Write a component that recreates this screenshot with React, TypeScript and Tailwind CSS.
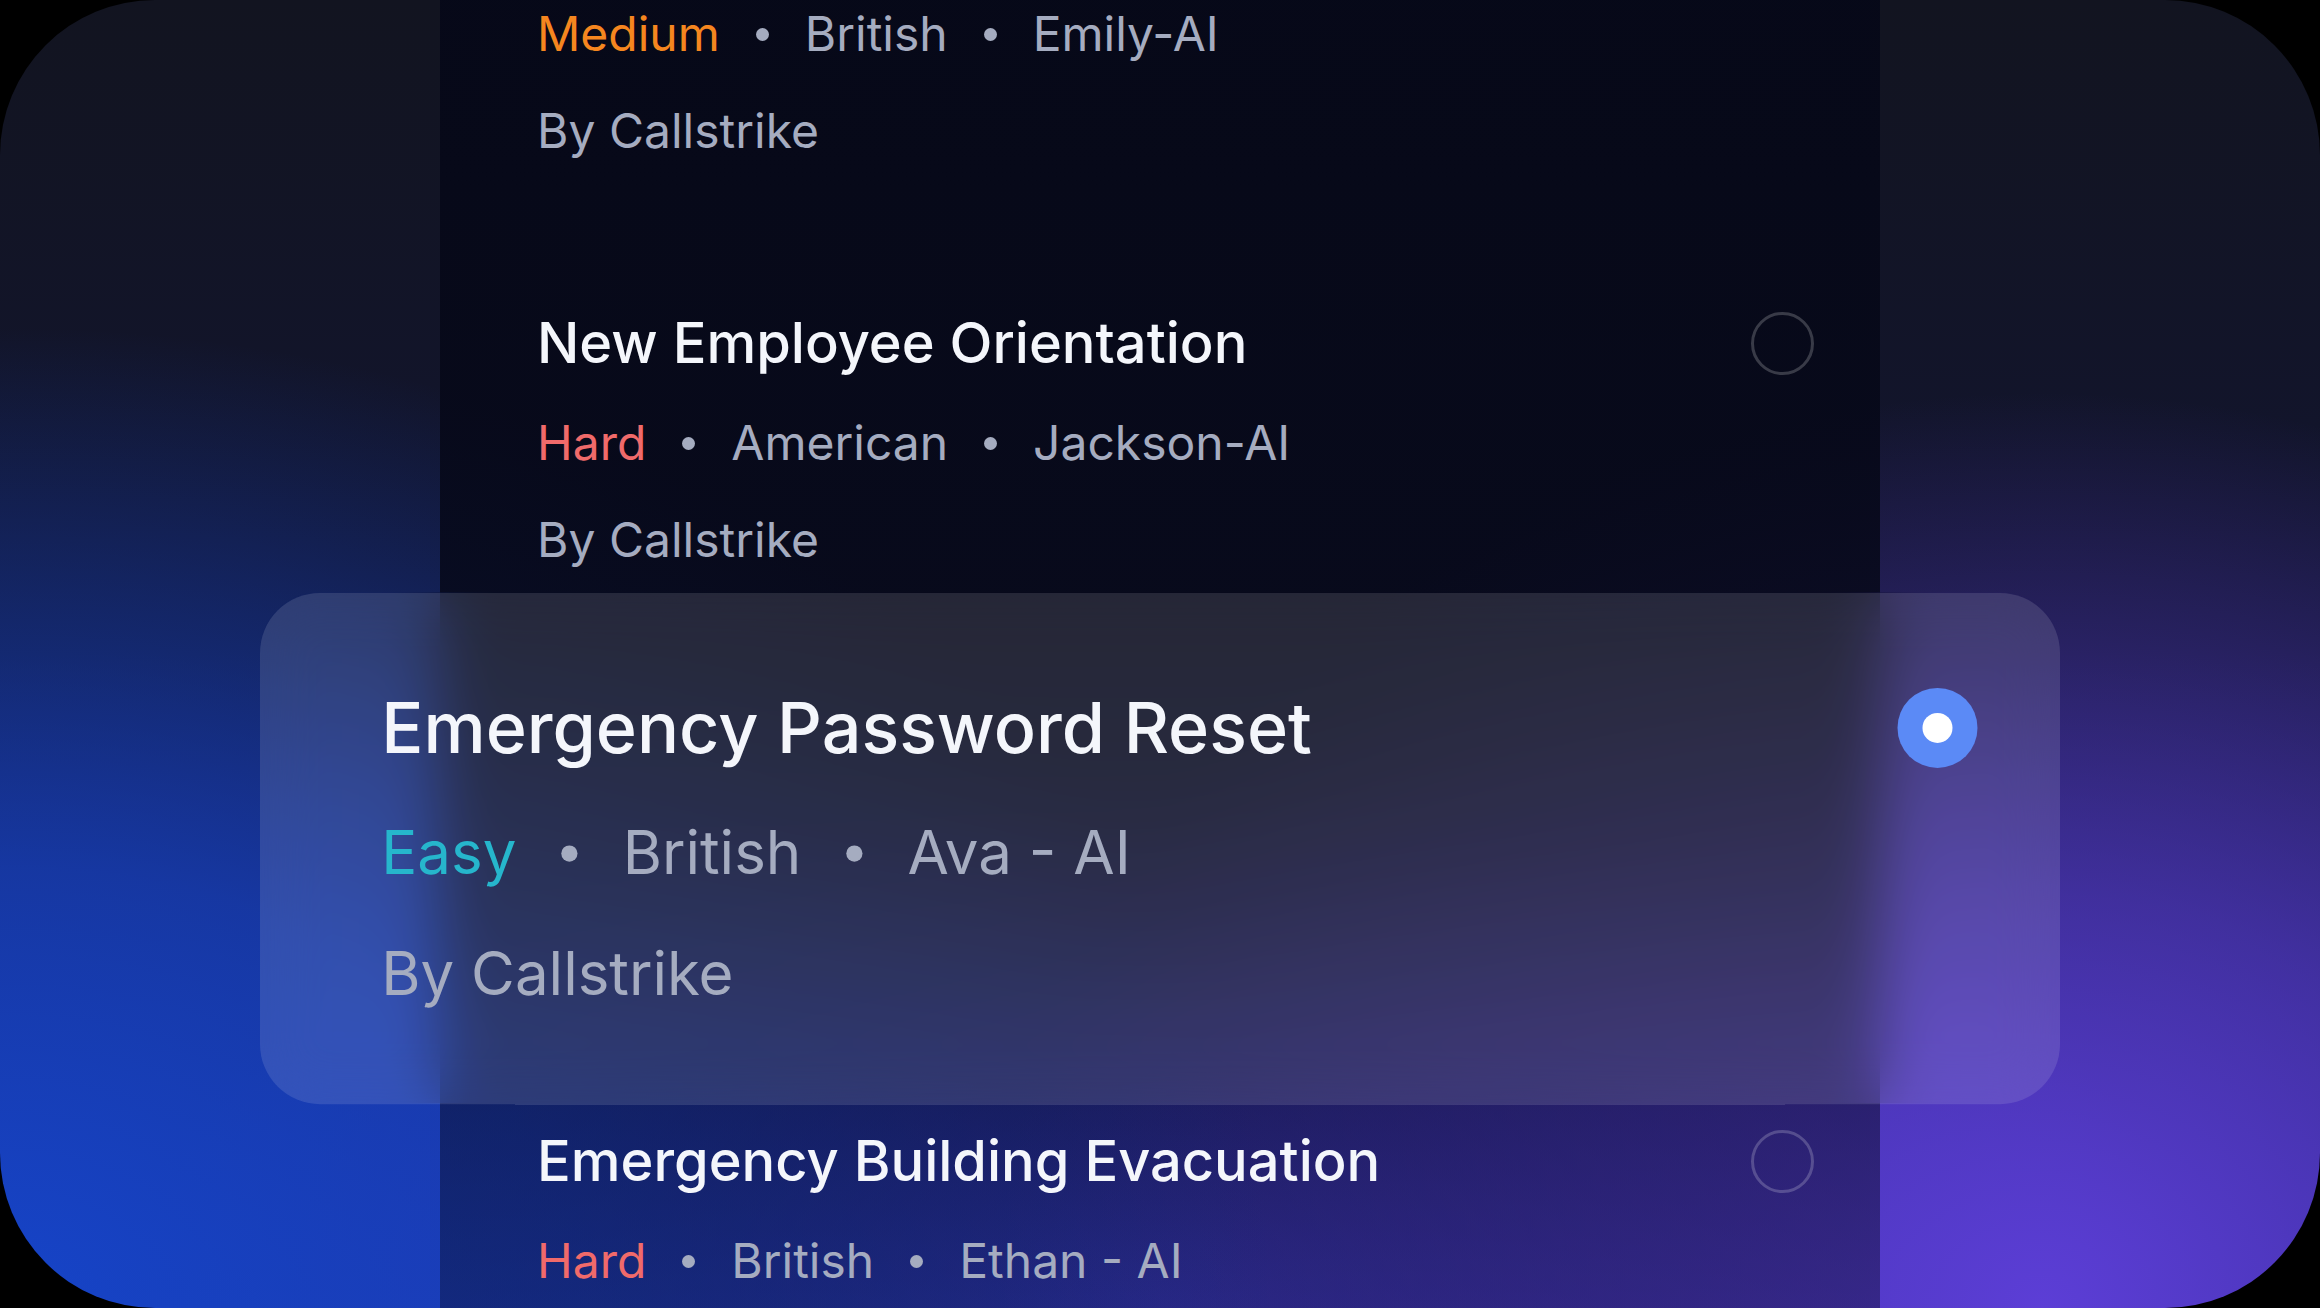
import React from "react";

type Item = {
  title: string;
  level: string;
  levelClass: string;
  accent: string;
  voice: string;
  by: string;
  selected?: boolean;
};

const items: Item[] = [
  { title: "", level: "Medium", levelClass: "text-[#f5861f]", accent: "British", voice: "Emily-AI", by: "By Callstrike" },
  { title: "New Employee Orientation", level: "Hard", levelClass: "text-[#f06a6a]", accent: "American", voice: "Jackson-AI", by: "By Callstrike" },
  { title: "Emergency Password Reset", level: "Easy", levelClass: "text-[#26b6cc]", accent: "British", voice: "Ava - AI", by: "By Callstrike", selected: true },
  { title: "Emergency Building Evacuation", level: "Hard", levelClass: "text-[#f06a6a]", accent: "British", voice: "Ethan - AI", by: "" },
];

function Dot() {
  return <span className="w-[13px] h-[13px] rounded-full bg-[#a5acc0] shrink-0" />;
}

function Radio({ selected }: { selected?: boolean }) {
  if (selected) {
    return (
      <span className="w-[64px] h-[64px] rounded-full bg-[#5b8af6] flex items-center justify-center shrink-0">
        <span className="w-[24px] h-[24px] rounded-full bg-white" />
      </span>
    );
  }
  return <span className="w-[63px] h-[63px] rounded-full border-[3px] border-white/20 shrink-0" />;
}

function Row({ item }: { item: Item }) {
  const base = "h-[409px] shrink-0 pt-[72px] pl-[97px] pr-[66px] flex flex-col";
  const sel = item.selected
    ? " relative z-10 scale-125 rounded-[48px] bg-white/[0.12] backdrop-blur-[24px]"
    : "";
  return (
    <div className={base + sel}>
      <div className="h-[72px] flex items-center justify-between">
        <span className="text-[56px] leading-[72px] font-medium text-[#f4f6fb] whitespace-nowrap">{item.title}</span>
        <Radio selected={item.selected} />
      </div>
      <div className="mt-[34px] h-[60px] flex items-center gap-[36px] text-[48px] leading-[60px] text-[#a5acc0] whitespace-nowrap">
        <span className={item.levelClass}>{item.level}</span>
        <Dot />
        <span>{item.accent}</span>
        <Dot />
        <span>{item.voice}</span>
      </div>
      {item.by ? (
        <div className="mt-[37px] h-[60px] text-[48px] leading-[60px] text-[#a5acc0] whitespace-nowrap">{item.by}</div>
      ) : null}
    </div>
  );
}

export default function App() {
  return (
    <div className="w-[2320px] h-[1308px] bg-black font-['Inter',sans-serif]">
      <div className="w-full h-full rounded-[155px] overflow-hidden flex justify-center bg-[radial-gradient(ellipse_55%_75%_at_0%_100%,rgba(22,68,200,1)_0%,rgba(22,68,200,0.7)_45%,rgba(22,68,200,0)_100%),radial-gradient(ellipse_45%_70%_at_88%_100%,rgba(92,62,214,1)_0%,rgba(92,62,214,0.6)_45%,rgba(92,62,214,0)_100%),radial-gradient(ellipse_45%_40%_at_50%_100%,rgba(64,64,214,0.8)_0%,rgba(64,64,214,0)_100%),linear-gradient(to_bottom,#121420_0%,#121531_50%,#1e2070_100%)]">
        <div className="w-[1440px] h-full shrink-0 bg-[linear-gradient(to_bottom,rgba(6,8,24,0.95)_0%,rgba(6,8,24,0.85)_45%,rgba(8,10,36,0.5)_85%,rgba(8,10,36,0.4)_100%)]">
          <div className="mt-[-174px] flex flex-col">
            {items.map((it, i) => (
              <Row key={i} item={it} />
            ))}
          </div>
        </div>
      </div>
    </div>
  );
}
